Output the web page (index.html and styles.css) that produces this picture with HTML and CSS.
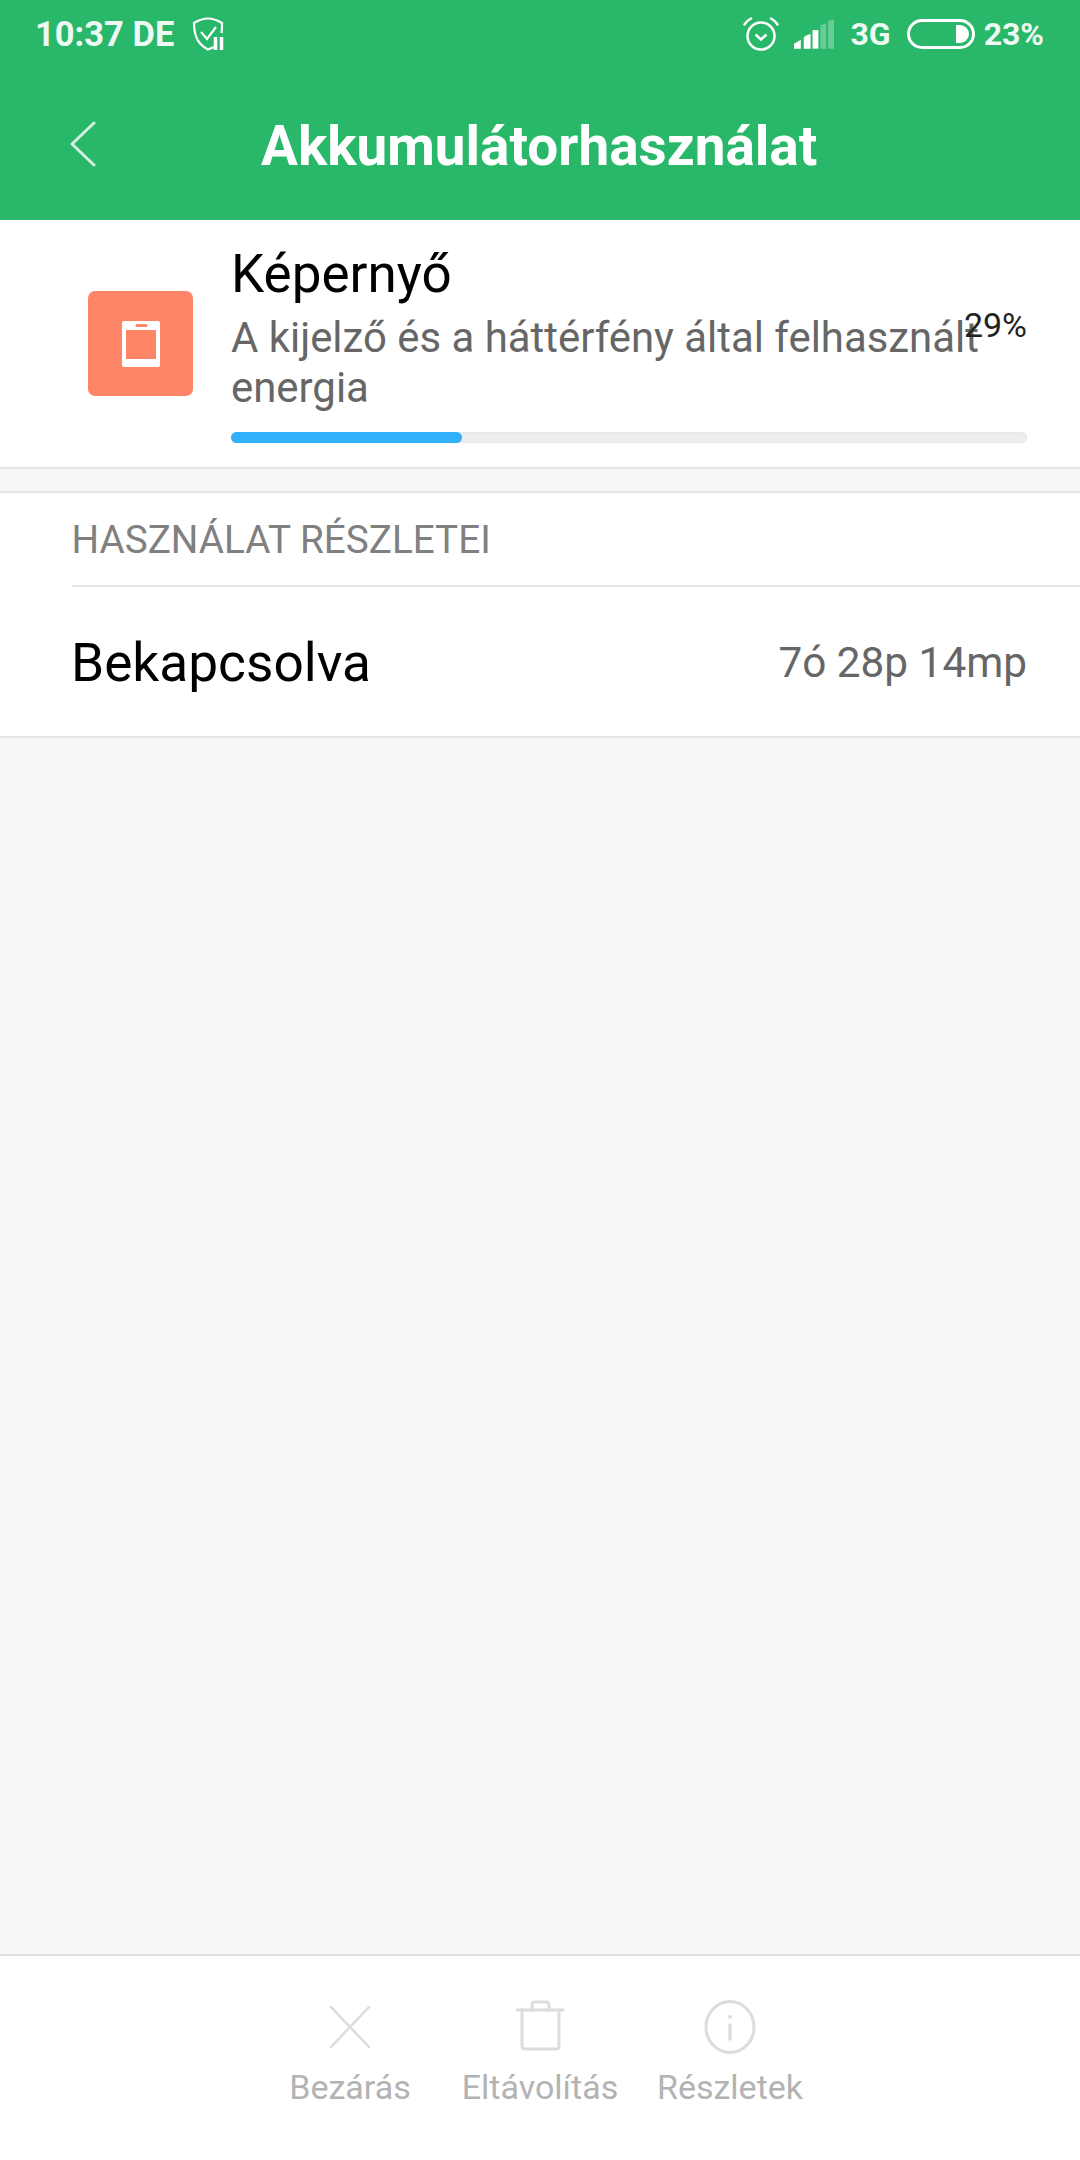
FILE: index.html
```html
<!DOCTYPE html>
<html lang="hu">
<head>
    <meta charset="UTF-8">
    <title>Akkumulátorhasználat</title>
    <link rel="stylesheet" href="styles.css">
</head>
<body>

<div class="page">
    <header class="top">
        <div class="status">
            <div class="status-side">
                <span class="time">10:37 DE</span>
                <svg class="shield" width="32" height="34" viewBox="0 0 32 34" fill="none" stroke="#fff" stroke-width="2.2">
                    <path d="M22 30 16 32.500C8 28 2 22 2 6C7 3 12 1.500 16 1.500C20 1.500 25 3 30 6C30 9 30 13 29.500 16"/>
                    <path d="M9 15 15 22 24 10"/>
                    <path d="M23.500 20V33M29.500 20V33" stroke-width="3.500"/>
                </svg>
            </div>
            <div class="status-side">
                <svg class="alarm" width="36" height="36" viewBox="0 0 36 36" fill="none" stroke="#fff" stroke-width="2.500">
                    <circle cx="18" cy="20" r="13.500"/>
                    <path d="M12.500 18.500 18 23.500 23.500 18.500"/>
                    <path d="M1.500 8.500C3 6 6 3.500 8 2.500M34.500 8.500C33 6 30 3.500 28 2.500" stroke-linecap="round"/>
                </svg>
                <svg class="signal" width="40" height="30" viewBox="0 0 41 30" fill="#fff">
                    <path d="M0 30V25L7 21V30Z"/>
                    <path d="M10 30V18.500C10 18 15 15 17 15V30Z"/>
                    <rect x="19" y="11" width="6" height="19"/>
                    <path d="M27 30V6L33 4V30Z" opacity="0.3"/>
                    <path d="M35 30V2L41 0V30Z" opacity="0.3"/>
                </svg>
                <span class="net">3G</span>
                <span class="battery"><span class="battery-fill"></span></span>
                <span class="level">23%</span>
            </div>
        </div>
        <div class="titlebar">
            <svg class="back" width="26" height="46" viewBox="0 0 26 46" fill="none" stroke="#fff" stroke-width="3" stroke-linecap="round" stroke-linejoin="round" opacity="0.8">
                <path d="M24 2 2 23 24 44"/>
            </svg>
            <h1 class="title">Akkumulátorhasználat</h1>
        </div>
    </header>

    <section class="item">
        <div class="item-icon">
            <svg width="40" height="46" viewBox="0 0 40 46">
                <path fill="#fff" fill-rule="evenodd" d="M3 0H37Q39 0 39 2V44Q39 46 37 46H3Q1 46 1 44V2Q1 0 3 0ZM5 9V38H35V9ZM16 3Q14.500 3 14.500 4.500Q14.500 6 16 6H25Q26.500 6 26.500 4.500Q26.500 3 25 3Z"/>
            </svg>
        </div>
        <div class="item-body">
            <div class="item-name">Képernyő</div>
            <div class="item-desc">A kijelző és a háttérfény által felhasznált energia</div>
            <div class="bar"><div class="bar-fill" style="width: 29%"></div></div>
        </div>
        <span class="item-pct">29%</span>
    </section>

    <div class="gap"></div>

    <section class="details">
        <div class="details-head">HASZNÁLAT RÉSZLETEI</div>
        <div class="details-row">
            <span class="details-label">Bekapcsolva</span>
            <span class="details-value">7ó 28p 14mp</span>
        </div>
    </section>

    <div class="filler"></div>

    <footer class="actions">
        <div class="action">
            <svg width="54" height="54" viewBox="0 0 54 54" fill="none" stroke="#dcdcdc" stroke-width="2.500" stroke-linecap="round">
                <path d="M8 7 46 47M46 7 8 47"/>
            </svg>
            <span>Bezárás</span>
        </div>
        <div class="action">
            <svg width="54" height="54" viewBox="0 0 54 54" fill="none" stroke="#dcdcdc" stroke-width="3" stroke-linecap="round" stroke-linejoin="round">
                <path d="M4 10H50"/>
                <path d="M9 10V46Q9 49 12 49H43Q46 49 46 46V10"/>
                <path d="M19 10V5Q19 2 22 2H33Q36 2 36 5V10"/>
            </svg>
            <span>Eltávolítás</span>
        </div>
        <div class="action">
            <svg width="54" height="54" viewBox="0 0 54 54" fill="none" stroke="#dcdcdc" stroke-width="3" stroke-linecap="round">
                <ellipse cx="27" cy="27" rx="24" ry="25.500"/>
                <path d="M27 25V39" stroke-width="3.500"/>
                <circle cx="27" cy="17" r="2" fill="#dcdcdc" stroke="none"/>
            </svg>
            <span>Részletek</span>
        </div>
    </footer>
</div>

</body>
</html>
```

FILE: styles.css
```css
html
{
    font-family: Roboto, "Noto Sans", sans-serif;
}

body
{
    margin: 0;
}

.page
{
    display: flex;
    flex-direction: column;
    width: 1080px;
    height: 2160px;
    background: #f7f7f7;
}

.top
{
    height: 220px;
    background: #29b76a;
    color: #fff;
}

.status
{
    display: flex;
    justify-content: space-between;
    align-items: center;
    height: 68px;
    padding: 0 36px 0 35px;
}

.status-side
{
    display: flex;
    align-items: center;
}

.time,
.net,
.level
{
    font-size: 32px;
    font-weight: 700;
    opacity: 0.92;
}

.time
{
    font-size: 34.500px;
}

.shield
{
    margin-left: 18px;
}

.signal
{
    margin-left: 15px;
}

.net
{
    margin-left: 16px;
}

.battery
{
    display: flex;
    justify-content: flex-end;
    align-items: center;
    box-sizing: border-box;
    width: 68px;
    height: 30px;
    margin-left: 16px;
    padding-right: 3px;
    border: 3px solid #fff;
    border-radius: 15px;
}

.battery-fill
{
    width: 13px;
    height: 18px;
    border-radius: 0 9px 9px 0;
    background: #fff;
}

.level
{
    margin-left: 9px;
}

.titlebar
{
    display: flex;
    align-items: center;
    height: 152px;
    padding-left: 70px;
}

.title
{
    margin: 3px 0 0 165px;
    font-size: 54.900px;
    font-weight: 700;
}

.item
{
    position: relative;
    display: flex;
    align-items: center;
    height: 249px;
    box-sizing: border-box;
    border-bottom: 2px solid #e6e6e6;
    background: #fff;
}

.item-icon
{
    display: flex;
    justify-content: center;
    align-items: center;
    flex: none;
    width: 105px;
    height: 105px;
    margin-left: 88px;
    border-radius: 7px;
    background: #ff8568;
}

.item-body
{
    flex: 1;
    margin-left: 38px;
    margin-right: 53px;
    margin-bottom: 2px;
}

.item-name
{
    margin-bottom: 8px;
    font-size: 53px;
    line-height: 62px;
    color: #000;
}

.item-desc
{
    font-size: 41.900px;
    line-height: 50px;
    color: #666;
}

.bar
{
    height: 11px;
    margin-top: 19px;
    border-radius: 6px;
    background: #eeeeee;
    box-shadow: inset 0 0 0 1px #e8e8e8;
}

.bar-fill
{
    height: 100%;
    border-radius: 6px;
    background: #33b0fb;
}

.item-pct
{
    position: absolute;
    top: 85px;
    right: 53px;
    font-size: 34px;
    color: #222;
}

.gap
{
    height: 22px;
}

.details
{
    border-top: 2px solid #e6e6e6;
    border-bottom: 2px solid #e6e6e6;
    background: #fff;
}

.details-head
{
    display: flex;
    align-items: center;
    height: 92px;
    margin-left: 71.500px;
    border-bottom: 2px solid #e6e6e6;
    font-size: 38.700px;
    color: #808080;
}

.details-row
{
    display: flex;
    justify-content: space-between;
    align-items: center;
    height: 149px;
    padding: 2px 53px 0 71px;
    box-sizing: border-box;
}

.details-label
{
    font-size: 53.200px;
    color: #000;
}

.details-value
{
    font-size: 42.300px;
    color: #666;
}

.filler
{
    flex: 1;
}

.actions
{
    display: grid;
    grid-template-columns: repeat(3, 190px);
    justify-content: center;
    height: 206px;
    box-sizing: border-box;
    padding-top: 44px;
    border-top: 2px solid #e0e0e0;
    background: #fff;
}

.action
{
    display: flex;
    flex-direction: column;
    align-items: center;
    align-self: start;
    gap: 13px;
    font-size: 34px;
    color: #b3b3b3;
}
```
